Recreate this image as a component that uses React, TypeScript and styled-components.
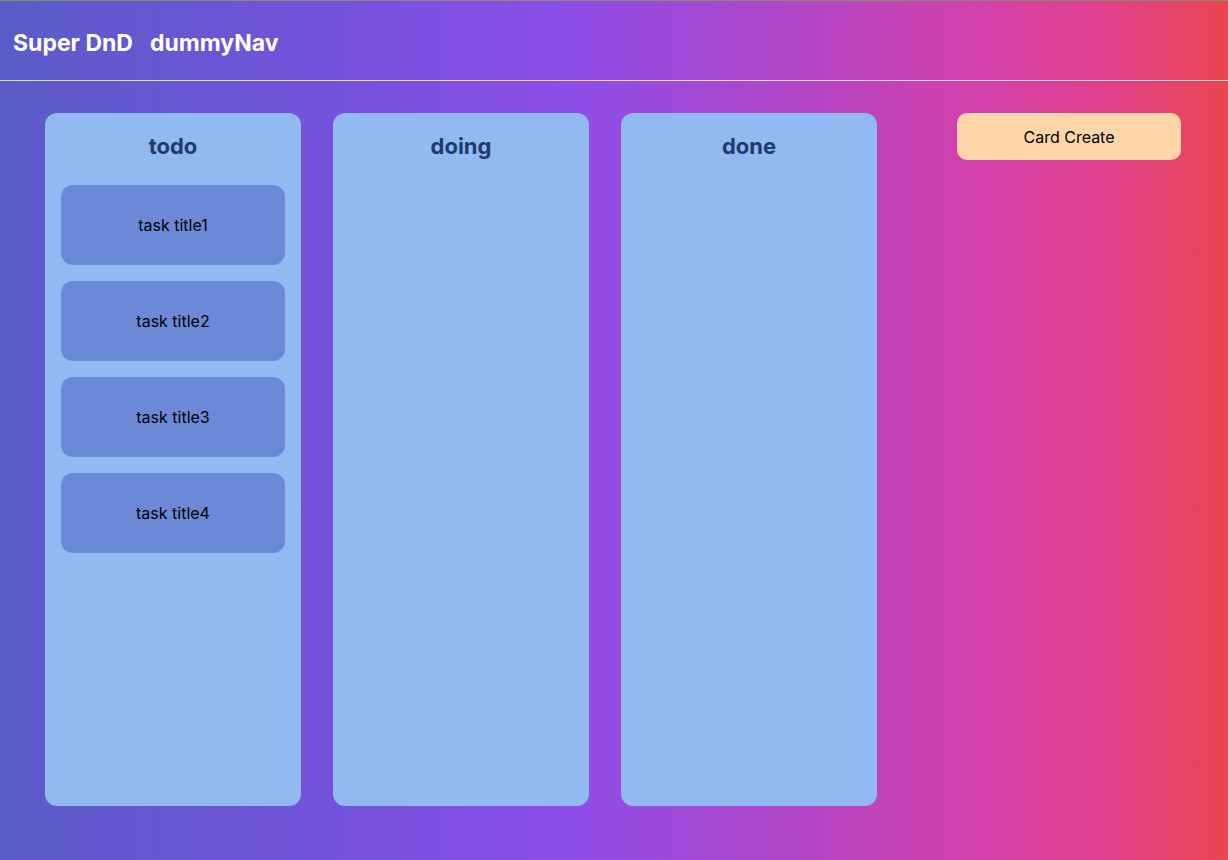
import React from "react";
import styled, { createGlobalStyle } from "styled-components";

const Global = createGlobalStyle`
  html, body { margin: 0; padding: 0; }
  body {
    font-family: Inter, "Noto Sans", "Liberation Sans", sans-serif;
    background: linear-gradient(90deg, #5a5cc8 0%, #7452dc 28%, #8c4de8 46%, #b046c8 64%, #d440aa 80%, #e0408c 90%, #ea4550 100%);
    min-height: 860px;
  }
`;

const Page = styled.div`
  min-height: 860px;
  display: flex;
  flex-direction: column;
  border-top: 1px solid #8a8a70;
  box-sizing: border-box;
`;

const Nav = styled.nav`
  height: 79px;
  display: flex;
  align-items: center;
  gap: 17px;
  padding: 0 13px;
  border-bottom: 1px solid #e6dcd0;
`;

const NavItem = styled.span`
  color: #ffffff;
  font-size: 23px;
  font-weight: 700;
  letter-spacing: 0;
  margin-top: 4px;
`;

const Main = styled.main`
  display: flex;
  align-items: flex-start;
  padding: 32px 45px;
`;

const Board = styled.div`
  display: flex;
  gap: 32px;
`;

const Column = styled.section`
  width: 256px;
  height: 693px;
  box-sizing: border-box;
  background: #93b9f2;
  border-radius: 12px;
  padding: 17px 16px 16px;
  display: flex;
  flex-direction: column;
  gap: 16px;
`;

const ColumnTitle = styled.h2`
  margin: 0 0 7px;
  text-align: center;
  font-size: 22px;
  font-weight: 700;
  color: #1e3a6e;
  line-height: 32px;
`;

const Card = styled.div`
  height: 80px;
  border-radius: 12px;
  background: #6c89d8;
  display: flex;
  align-items: center;
  justify-content: center;
  color: #000;
  font-size: 16px;
`;

const CreateButton = styled.button`
  margin-left: 80px;
  width: 224px;
  height: 47px;
  border: none;
  border-radius: 10px;
  background: #fcd6a8;
  color: #000;
  font-family: Inter, "Noto Sans", "Liberation Sans", sans-serif;
  font-size: 16px;
  cursor: pointer;
`;

const columns: { title: string; cards: string[] }[] = [
  { title: "todo", cards: ["task title1", "task title2", "task title3", "task title4"] },
  { title: "doing", cards: [] },
  { title: "done", cards: [] },
];

export default function App() {
  return (
    <>
      <Global />
      <Page>
        <Nav>
          <NavItem>Super DnD</NavItem>
          <NavItem>dummyNav</NavItem>
        </Nav>
        <Main>
          <Board>
            {columns.map((c) => (
              <Column key={c.title}>
                <ColumnTitle>{c.title}</ColumnTitle>
                {c.cards.map((t) => (
                  <Card key={t}>{t}</Card>
                ))}
              </Column>
            ))}
          </Board>
          <CreateButton>Card Create</CreateButton>
        </Main>
      </Page>
    </>
  );
}
